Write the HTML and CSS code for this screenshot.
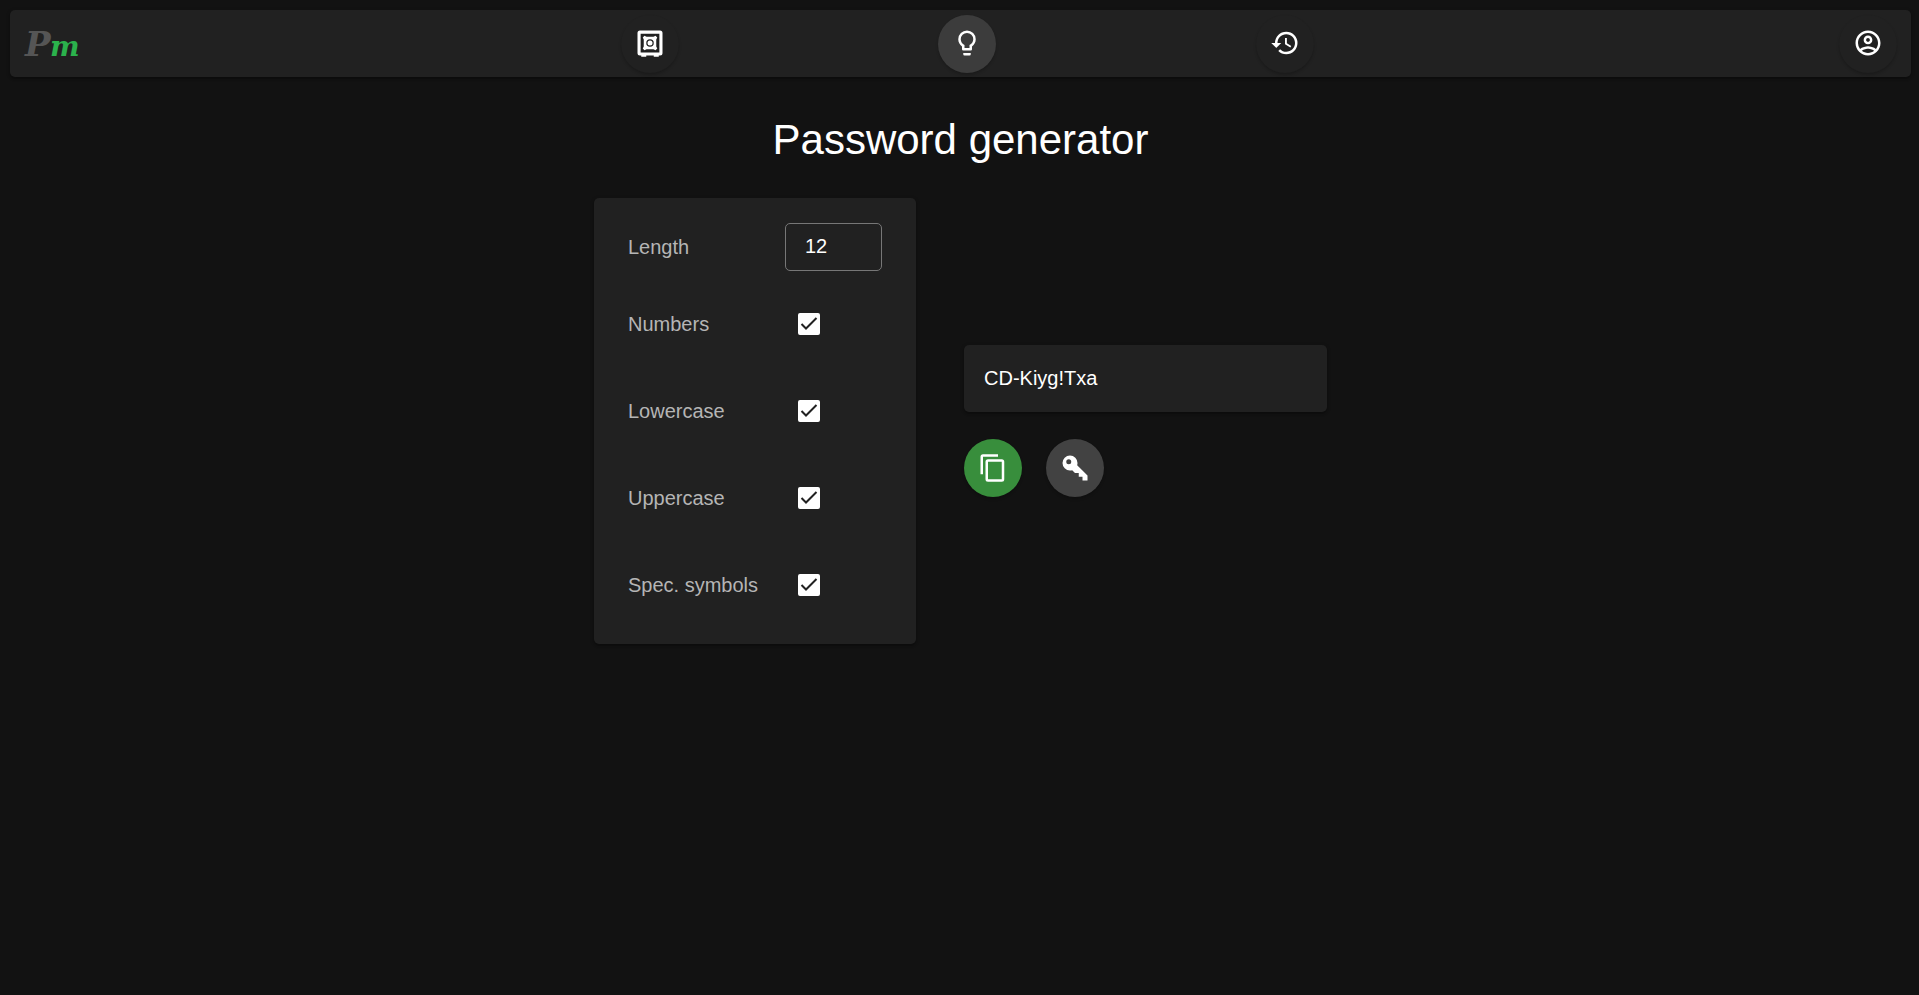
FILE: index.html
```html
<!DOCTYPE html>
<html lang="en">
<head>
<meta charset="utf-8">
<meta name="viewport" content="width=device-width, initial-scale=1">
<title>Password generator</title>
<link rel="stylesheet" href="styles.css">
</head>
<body>
<header class="bar surface">
  <a class="brand" href="#" aria-label="Pm home">
    <svg class="brand-logo" viewBox="0 0 62 32" aria-hidden="true">
      <text class="brand-p" x="3" y="28">P</text>
      <text class="brand-m" x="28" y="28">m</text>
    </svg>
  </a>
  <nav class="nav" aria-label="Main">
    <a class="round" href="#" aria-label="Vault">
      <svg class="icon" viewBox="0 0 24 24"><path fill-rule="evenodd" d="M4 2h16a2 2 0 0 1 2 2v16a2 2 0 0 1-2 2h-1v1h-4v-1H9v1H5v-1H4a2 2 0 0 1-2-2V4a2 2 0 0 1 2-2zM4.500 4.500v15h15v-15z"/><path fill-rule="evenodd" d="M6.200 7.600 7.600 6.200l1.600.8h5.600l1.600-.8 1.400 1.400-.8 1.600v5.600l.8 1.600-1.400 1.400-1.600-.8H9.200l-1.600.8-1.400-1.400.8-1.600V9.200zM12 9a3 3 0 1 0 0 6 3 3 0 0 0 0-6z"/><circle cx="12" cy="12" r="2"/></svg>
    </a>
    <a class="round active" href="#" aria-label="Generator" aria-current="page">
      <svg class="icon" viewBox="0 0 24 24"><path d="M12 2a7 7 0 0 1 7 7c0 2.380-1.190 4.470-3 5.740V17a1 1 0 0 1-1 1H9a1 1 0 0 1-1-1v-2.260C6.190 13.470 5 11.380 5 9a7 7 0 0 1 7-7M9 21v-1h6v1a1 1 0 0 1-1 1h-4a1 1 0 0 1-1-1m3-17a5 5 0 0 0-5 5c0 2.050 1.230 3.810 3 4.580V16h4v-2.420c1.770-.77 3-2.530 3-4.580a5 5 0 0 0-5-5z"/></svg>
    </a>
    <a class="round" href="#" aria-label="History">
      <svg class="icon" viewBox="0 0 24 24"><path d="M13 3a9 9 0 0 0-9 9H1l3.890 3.890.07.14L9 12H6c0-3.870 3.130-7 7-7s7 3.130 7 7-3.130 7-7 7c-1.930 0-3.680-.79-4.940-2.060l-1.420 1.420A8.954 8.954 0 0 0 13 21a9 9 0 0 0 0-18zm-1 5v5l4.280 2.540.72-1.210-3.500-2.080V8H12z"/></svg>
    </a>
  </nav>
  <a class="round account" href="#" aria-label="Account">
    <svg class="icon" viewBox="0 0 24 24"><path d="M12 2C6.480 2 2 6.480 2 12s4.480 10 10 10 10-4.480 10-10S17.520 2 12 2zM7.070 18.280c.43-.9 3.050-1.780 4.930-1.780s4.510.88 4.930 1.780C15.570 19.360 13.860 20 12 20s-3.570-.64-4.930-1.720zm11.290-1.450c-1.430-1.740-4.900-2.330-6.360-2.330s-4.930.59-6.360 2.330A7.950 7.950 0 0 1 4 12c0-4.410 3.590-8 8-8s8 3.590 8 8c0 1.820-.62 3.490-1.640 4.830zM12 6c-1.940 0-3.500 1.560-3.500 3.500S10.060 13 12 13s3.500-1.560 3.500-3.500S13.940 6 12 6zm0 5c-.83 0-1.500-.67-1.500-1.500S11.170 8 12 8s1.500.67 1.500 1.500S12.830 11 12 11z"/></svg>
  </a>
</header>
<main class="page">
  <h1 class="title">Password generator</h1>
  <div class="generator">
    <form class="options surface">
      <div class="row row-length">
        <label for="length">Length</label>
        <input class="number" id="length" type="number" value="12">
      </div>
      <div class="row">
        <label for="numbers">Numbers</label>
        <span class="tick"><input id="numbers" type="checkbox" checked><svg viewBox="0 0 22 22" aria-hidden="true"><path d="M3.500 11 8 15.500 18.500 5"/></svg></span>
      </div>
      <div class="row">
        <label for="lowercase">Lowercase</label>
        <span class="tick"><input id="lowercase" type="checkbox" checked><svg viewBox="0 0 22 22" aria-hidden="true"><path d="M3.500 11 8 15.500 18.500 5"/></svg></span>
      </div>
      <div class="row">
        <label for="uppercase">Uppercase</label>
        <span class="tick"><input id="uppercase" type="checkbox" checked><svg viewBox="0 0 22 22" aria-hidden="true"><path d="M3.500 11 8 15.500 18.500 5"/></svg></span>
      </div>
      <div class="row">
        <label for="symbols">Spec. symbols</label>
        <span class="tick"><input id="symbols" type="checkbox" checked><svg viewBox="0 0 22 22" aria-hidden="true"><path d="M3.500 11 8 15.500 18.500 5"/></svg></span>
      </div>
    </form>
    <section class="result" aria-label="Generated password">
      <output class="password surface">CD-Kiyg!Txa</output>
      <div class="actions">
        <button class="round copy" type="button" aria-label="Copy">
          <svg class="icon" viewBox="0 0 24 24"><path d="M19 21H8V7h11m0-2H8a2 2 0 0 0-2 2v14a2 2 0 0 0 2 2h11a2 2 0 0 0 2-2V7a2 2 0 0 0-2-2m-3-4H4a2 2 0 0 0-2 2v14h2V3h12V1z"/></svg>
        </button>
        <button class="round generate" type="button" aria-label="Generate">
          <svg class="icon" viewBox="0 0 24 24"><path d="M22 18v4h-4v-3h-3v-3h-3l-2.260-2.260c-.55.17-1.130.26-1.740.26a6 6 0 1 1 6-6c0 .61-.09 1.190-.26 1.740L22 18M7 5a2 2 0 1 0 0 4 2 2 0 0 0 0-4z"/></svg>
        </button>
      </div>
    </section>
  </div>
</main>
</body>
</html>
```
FILE: styles.css
```css
* {
  box-sizing: border-box;
}

body {
  margin: 0;
  padding: 10px 8px 10px 10px;
  background: #121212;
  color: #fff;
  font: 20px/30px "Liberation Sans", Arial, sans-serif;
}

.surface {
  background: #212121;
  border-radius: 5px;
  box-shadow: 0 2px 2px rgba(0, 0, 0, 0.2), 0 1px 4px rgba(0, 0, 0, 0.2);
}

.bar {
  display: grid;
  grid-template-columns: 31fr 63fr 30fr;
  align-items: center;
  padding: 5px 14px 4px 12px;
}

.bar .round {
  padding-bottom: 2px;
}

.brand {
  display: flex;
}

.brand-logo {
  width: 62px;
  height: 32px;
  overflow: visible;
}

.brand-p,
.brand-m {
  font-family: "DejaVu Serif", serif;
  font-style: italic;
  font-weight: 700;
}

.brand-p {
  font-size: 34px;
  fill: #555;
}

.brand-m {
  font-size: 28px;
  fill: #2bb24c;
}

.nav {
  display: grid;
  grid-template-columns: repeat(3, 1fr);
  justify-items: center;
}

.round {
  display: flex;
  align-items: center;
  justify-content: center;
  width: 58px;
  height: 58px;
  padding: 0;
  border: 0;
  border-radius: 50%;
  background: #212121;
  color: #fff;
  cursor: pointer;
  box-shadow: 0 2px 3px rgba(0, 0, 0, 0.2);
}

.active {
  background: #3c3c3c;
}

.account {
  justify-self: end;
}

.copy {
  background: #388e3c;
}

.generate {
  background: #424242;
}

.icon {
  width: 30px;
  height: 30px;
  fill: currentColor;
}

.page {
  padding-top: 33px;
}

.title {
  margin: 0 0 28px;
  font-size: 42px;
  font-weight: 400;
  line-height: 60px;
  text-align: center;
}

.generator {
  display: flex;
  flex-wrap: wrap;
  align-items: center;
  justify-content: center;
  gap: 48px;
}

.options {
  width: 322px;
  padding: 16px 34px;
}

.row {
  display: grid;
  grid-template-columns: 1fr 97px;
  align-items: center;
  min-height: 87px;
  color: #b5b5b5;
}

.row-length {
  min-height: 66px;
}

.number {
  width: 100%;
  height: 48px;
  padding: 0 0 2px 19px;
  border: 1px solid #777;
  border-radius: 5px;
  background: transparent;
  color: #fff;
  font: inherit;
  appearance: textfield;
}

.tick {
  display: grid;
  width: 22px;
  height: 22px;
  margin-left: 13px;
}

.tick > * {
  grid-area: 1 / 1;
  width: 22px;
  height: 22px;
  margin: 0;
}

.tick input {
  appearance: none;
  border: 2px solid #fff;
  border-radius: 2px;
}

.tick input:checked {
  background: #fff;
}

.tick svg {
  fill: none;
  stroke: #212121;
  stroke-width: 2;
  pointer-events: none;
}

.result {
  display: grid;
  gap: 27px;
  width: 363px;
}

.password {
  padding: 18px 20px 19px;
}

.actions {
  display: flex;
  gap: 24px;
}
```
